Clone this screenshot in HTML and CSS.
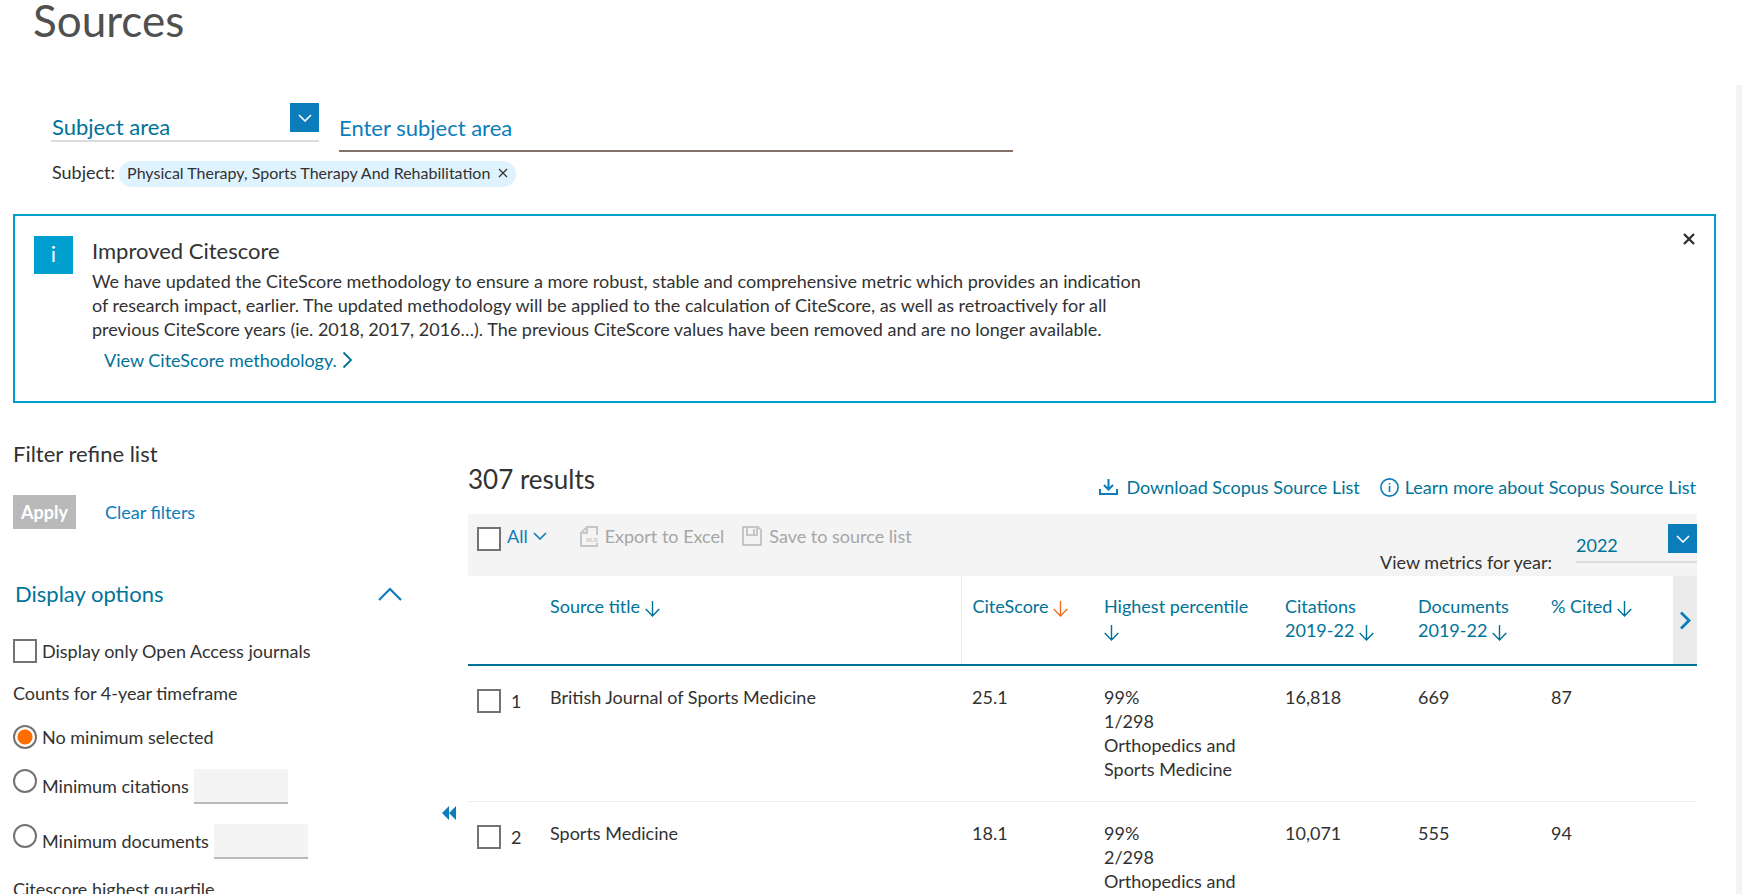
FILE: index.html
```html
<!DOCTYPE html>
<html lang="en">
<head>
<meta charset="utf-8">
<meta name="viewport" content="width=device-width, initial-scale=1">
<title>Sources</title>
<link rel="stylesheet" href="styles.css">
</head>
<body>
<svg class="sprite" aria-hidden="true">
  <symbol id="arrow-down" viewBox="0 0 15 16"><path d="M7.5 0V15M0.7 8l6.8 7 6.8-7" fill="none" stroke="currentColor" stroke-width="1.4"/></symbol>
  <symbol id="chevron-down" viewBox="0 0 14 8"><path d="M1 1l6 6 6-6" fill="none" stroke="currentColor" stroke-width="1.6"/></symbol>
</svg>

<h1 class="page-title">Sources</h1>

<main class="page">
  <form class="search">
    <div class="search-fields">
      <div class="picker picker-subject">
        <select class="picker-select" aria-label="Search by"><option>Subject area</option></select>
        <span class="picker-button"><svg width="14" height="8"><use href="#chevron-down"/></svg></span>
      </div>
      <input class="search-input" type="text" placeholder="Enter subject area" aria-label="Enter subject area">
    </div>
    <div class="search-tags">
      <span>Subject:</span>
      <span class="chip">Physical Therapy, Sports Therapy And Rehabilitation
        <button class="icon-button" type="button" aria-label="Remove subject"><svg width="10" height="10" viewBox="0 0 10 10"><path d="M1 1l8 8M9 1L1 9" fill="none" stroke="currentColor" stroke-width="1.2"/></svg></button>
      </span>
    </div>
  </form>

  <section class="notice">
    <span class="notice-icon" aria-hidden="true">i</span>
    <div class="notice-body">
      <h2 class="heading">Improved Citescore</h2>
      <p class="notice-text">We have updated the CiteScore methodology to ensure a more robust, stable and comprehensive metric which provides an indication<br>of research impact, earlier. The updated methodology will be applied to the calculation of CiteScore, as well as retroactively for all<br>previous CiteScore years (ie. 2018, 2017, 2016…). The previous CiteScore values have been removed and are no longer available.</p>
      <a class="notice-link" href="#">View CiteScore methodology. <svg width="11" height="18" viewBox="0 0 11 18"><path d="M1.5 1.5l7.5 7.5-7.5 7.5" fill="none" stroke="currentColor" stroke-width="1.8"/></svg></a>
    </div>
    <button class="icon-button notice-close" type="button" aria-label="Close"><svg width="14" height="14" viewBox="0 0 14 14"><path d="M2 2l10 10M12 2L2 12" fill="none" stroke="currentColor" stroke-width="2.4"/></svg></button>
  </section>

  <div class="columns">
    <aside class="filters">
      <h2 class="heading">Filter refine list</h2>
      <div class="filter-actions">
        <button class="apply" type="button" disabled>Apply</button>
        <button class="text-button" type="button">Clear filters</button>
      </div>
      <button class="section-toggle" type="button" aria-expanded="true">Display options
        <svg width="24" height="14" viewBox="0 0 24 14"><path d="M1 13L12 2l11 11" fill="none" stroke="currentColor" stroke-width="2.2"/></svg></button>
      <label class="option option-first"><input class="box" type="checkbox">Display only Open Access journals</label>
      <p class="filter-label">Counts for 4-year timeframe</p>
      <label class="option option-radio"><input class="box radio" type="radio" name="minimum" checked>No minimum selected</label>
      <div class="option option-count">
        <input class="box radio" type="radio" name="minimum" id="min-cit">
        <label for="min-cit">Minimum citations</label>
        <input class="count" type="text" aria-label="Minimum citations value">
      </div>
      <div class="option option-count">
        <input class="box radio" type="radio" name="minimum" id="min-doc">
        <label for="min-doc">Minimum documents</label>
        <input class="count" type="text" aria-label="Minimum documents value">
      </div>
      <p class="filter-label">Citescore highest quartile</p>
    </aside>

    <button class="icon-button collapse" type="button" aria-label="Collapse filters"><svg width="14" height="14" viewBox="0 0 14 14"><path d="M7 0v14L0 7zM14 0v14L7 7z" fill="currentColor"/></svg></button>

    <section class="results">
      <header class="results-head">
        <h2 class="results-title">307 results</h2>
        <nav class="results-links">
          <a class="icon-link" href="#"><svg width="19" height="16" viewBox="0 0 19 16"><path d="M1 10v5h17v-5M9.500 0v10M5 6l4.500 4.500L14 6" fill="none" stroke="#0c7dbb" stroke-width="2"/></svg>Download Scopus Source List</a>
          <a class="icon-link link-info" href="#"><svg width="19" height="19" viewBox="0 0 19 19"><circle cx="9.500" cy="9.500" r="8.600" fill="none" stroke="#0c7dbb" stroke-width="1.600"/><path d="M9.500 8v6M9.500 5v1.600" stroke="#0c7dbb" stroke-width="1.600"/></svg>Learn more about Scopus Source List</a>
        </nav>
      </header>

      <div class="toolbar">
        <input class="box toolbar-box" type="checkbox" aria-label="Select all">
        <button class="text-button toolbar-all" type="button">All <svg width="14" height="8"><use href="#chevron-down"/></svg></button>
        <button class="tool tool-export" type="button" disabled><svg width="18" height="21" viewBox="0 0 18 21"><path d="M17 9V1H7L1 7v13h16v-3M7 1v6H2" fill="none" stroke="#c6c6c6" stroke-width="2"/><text x="6" y="16" class="xls">XLS</text></svg>Export to Excel</button>
        <button class="tool" type="button" disabled><svg width="20" height="20" viewBox="0 0 20 20"><path d="M1 0v19h18V4l-3-3H1M5 1v8h10V1M12 3v5" fill="none" stroke="#c6c6c6" stroke-width="2"/></svg>Save to source list</button>
        <label class="year-label" for="year">View metrics for year:</label>
        <div class="picker picker-year">
          <select class="picker-select" id="year"><option>2022</option></select>
          <span class="picker-button"><svg width="14" height="8"><use href="#chevron-down"/></svg></span>
        </div>
      </div>

      <table class="sources">
        <colgroup><col class="c-check"><col><col class="c-score"><col class="c-pct"><col class="c-num"><col class="c-num"><col class="c-cited"><col class="c-next"></colgroup>
        <thead>
          <tr>
            <th></th>
            <th><a href="#">Source title <svg width="15" height="16"><use href="#arrow-down"/></svg></a></th>
            <th class="divided"><a href="#">CiteScore <svg class="sorted" width="15" height="16"><use href="#arrow-down"/></svg></a></th>
            <th><a href="#">Highest percentile <svg width="15" height="16"><use href="#arrow-down"/></svg></a></th>
            <th><a href="#">Citations<br>2019-22 <svg width="15" height="16"><use href="#arrow-down"/></svg></a></th>
            <th><a href="#">Documents<br>2019-22 <svg width="15" height="16"><use href="#arrow-down"/></svg></a></th>
            <th><a href="#">% Cited <svg width="15" height="16"><use href="#arrow-down"/></svg></a></th>
            <th class="next"><button class="next-button" type="button" aria-label="More columns"><svg width="12" height="19" viewBox="0 0 12 19"><path d="M2 1.500l8 8-8 8" fill="none" stroke="currentColor" stroke-width="2.800"/></svg></button></th>
          </tr>
        </thead>
        <tbody>
          <tr>
            <td class="row-check"><label class="row-label"><input class="box" type="checkbox">1</label></td>
            <td>British Journal of Sports Medicine</td>
            <td>25.1</td>
            <td>99%<br>1/298<br>Orthopedics and<br>Sports Medicine</td>
            <td>16,818</td><td>669</td><td colspan="2">87</td>
          </tr>
          <tr>
            <td class="row-check"><label class="row-label"><input class="box" type="checkbox">2</label></td>
            <td>Sports Medicine</td>
            <td>18.1</td>
            <td>99%<br>2/298<br>Orthopedics and</td>
            <td>10,071</td><td>555</td><td colspan="2">94</td>
          </tr>
        </tbody>
      </table>
    </section>
  </div>
</main>
</body>
</html>
```

FILE: styles.css
```css
* { box-sizing: border-box; }

body {
  margin: 0;
  height: 100vh;
  overflow: hidden;
  background: #fff;
  color: #323232;
  font: 18px/24px Lato, "Open Sans", sans-serif;
}

h1, h2, p { margin: 0; font-weight: 400; }
a { color: #007398; text-decoration: none; }
button, input, select { font: inherit; color: inherit; border-radius: 0; margin: 0; }
button { border: 0; padding: 0; background: none; cursor: pointer; }
svg { flex: none; }
.sprite { display: none; }

.page-title { padding-left: 33px; color: #505050; font-size: 44px; line-height: 40px; }
.page { margin-top: 45px; padding: 18px 20px 0 13px; border-right: 6px solid #f4f4f4; }
.heading { font-size: 22px; line-height: 30px; }

/* Search */
.search { padding-left: 38px; }
.search-fields { display: flex; align-items: flex-start; gap: 20px; }
.picker { position: relative; height: 39px; border-bottom: 2px solid #dcdcdc; }
.picker-subject { width: 268px; font-size: 22px; }
.picker-select {
  width: 100%;
  height: 37px;
  padding: 11px 0 0 1px;
  border: 0;
  background: none;
  color: #007398;
  line-height: 26px;
  appearance: none;
}
.picker-button {
  position: absolute;
  top: 0;
  right: 0;
  display: grid;
  place-items: center;
  width: 29px;
  height: 29px;
  background: #0c7dbb;
  color: #fff;
  pointer-events: none;
}
.search-input {
  flex: 0 1 674px;
  min-width: 0;
  height: 49px;
  padding: 2px 0 0;
  border: 0;
  border-bottom: 2px solid #857268;
  background: none;
  font-size: 22px;
}
.search-input::placeholder { color: #0c7dbb; opacity: 1; }
.search-tags { display: flex; align-items: baseline; gap: 4px; margin-top: 8px; padding-left: 1px; }
.chip {
  display: flex;
  align-items: center;
  gap: 8px;
  padding: 0 8px 2px;
  border-radius: 13px;
  background: #dff3ff;
  font-size: 16px;
}
.icon-button { display: flex; }

/* Notice */
.notice {
  display: flex;
  gap: 19px;
  margin-top: 27px;
  padding: 20px 18px 29px 19px;
  border: 2px solid #009fd0;
}
.notice-icon {
  width: 39px;
  height: 38px;
  background: #009fd0;
  color: #fff;
  font-size: 22px;
  line-height: 36px;
  text-align: center;
}
.notice-body { flex: 1; }
.notice-text { margin-top: 3px; }
.notice-link { display: inline-flex; align-items: center; gap: 5px; margin: 7px 0 0 12px; }
.notice-close { align-self: flex-start; margin-top: -4px; }

/* Filters */
.columns { display: flex; align-items: flex-start; margin-top: 36px; }
.filters { width: 389px; flex: none; }
.filter-actions { display: flex; gap: 29px; margin-top: 26px; }
.apply { height: 34px; padding: 0 8px; background: #b9b9b9; color: #fff; font-weight: 700; }
.text-button { color: #0c7dbb; }
.section-toggle {
  display: flex;
  justify-content: space-between;
  align-items: center;
  width: 100%;
  margin-top: 50px;
  padding-left: 2px;
  color: #007398;
  font-size: 22px;
  line-height: 30px;
}
.section-toggle svg { color: #0c7dbb; }
.option { display: flex; gap: 5px; }
.option-first { margin-top: 30px; }
.box {
  flex: none;
  width: 24px;
  height: 24px;
  border: 2px solid #737373;
  background: #fff;
  appearance: none;
}
.radio { border-radius: 50%; }
.radio:checked { background: radial-gradient(circle, #ff6c00 7px, #fff 8px); }
.filter-label { margin-top: 18px; }
.option-radio { margin-top: 20px; }
.option-count { margin-top: 20px; }
.option-count label { padding-top: 5px; }
.count { width: 94px; height: 35px; border: 0; border-bottom: 2px solid #b9b9b9; background: #f4f4f4; }
.collapse { margin: 367px 12px 0 40px; color: #0c7dbb; }

/* Results */
.results { flex: 1; min-width: 0; margin: 24px 19px 0 0; }
.results-head { display: flex; justify-content: space-between; height: 51px; }
.results-title { font-size: 26px; line-height: 32px; }
.results-links { display: flex; gap: 20px; padding: 12px 1px 0 0; }
.icon-link { display: flex; align-items: center; gap: 8px; height: 24px; }
.link-info { gap: 6px; }
.toolbar { display: flex; align-items: flex-start; height: 62px; padding: 10px 0 0 9px; background: #f4f4f4; }
.toolbar-box { margin: 3px 6px 0 0; }
.toolbar-all { display: flex; align-items: center; gap: 5px; }
.tool { display: flex; align-items: center; gap: 7px; color: #a6a6a6; }
.tool-export { margin: 0 18px 0 33px; }
.xls { fill: #c6c6c6; font: 700 6px "Liberation Sans", sans-serif; }
.year-label { align-self: flex-end; margin: 0 24px 2px auto; }
.picker-year { width: 121px; }
.picker-year .picker-select { padding: 7px 0 3px; }

.sources { width: 100%; table-layout: fixed; border-collapse: collapse; }
.c-check { width: 71px; }
.c-score { width: 132px; }
.c-pct { width: 181px; }
.c-num { width: 133px; }
.c-cited { width: 133px; }
.c-next { width: 24px; }
.sources th { height: 89px; padding: 18px 10px 0 11px; border-bottom: 2px solid #007398; font-weight: 400; text-align: left; vertical-align: top; }
.sources th svg { vertical-align: -4px; }
.sources .divided { border-left: 1px solid #ebebeb; }
.sources .sorted { color: #f36d21; }
.sources .next { padding: 0; }
.next-button { display: grid; place-items: center; width: 24px; height: 88px; background: #ebebeb; color: #0c7dbb; }
.sources td { padding: 19px 0 20px 11px; border-bottom: 1px solid #ebebeb; vertical-align: top; }
.sources .row-check { padding: 23px 0 0 9px; }
.row-label { display: flex; gap: 10px; line-height: 24px; }
```
